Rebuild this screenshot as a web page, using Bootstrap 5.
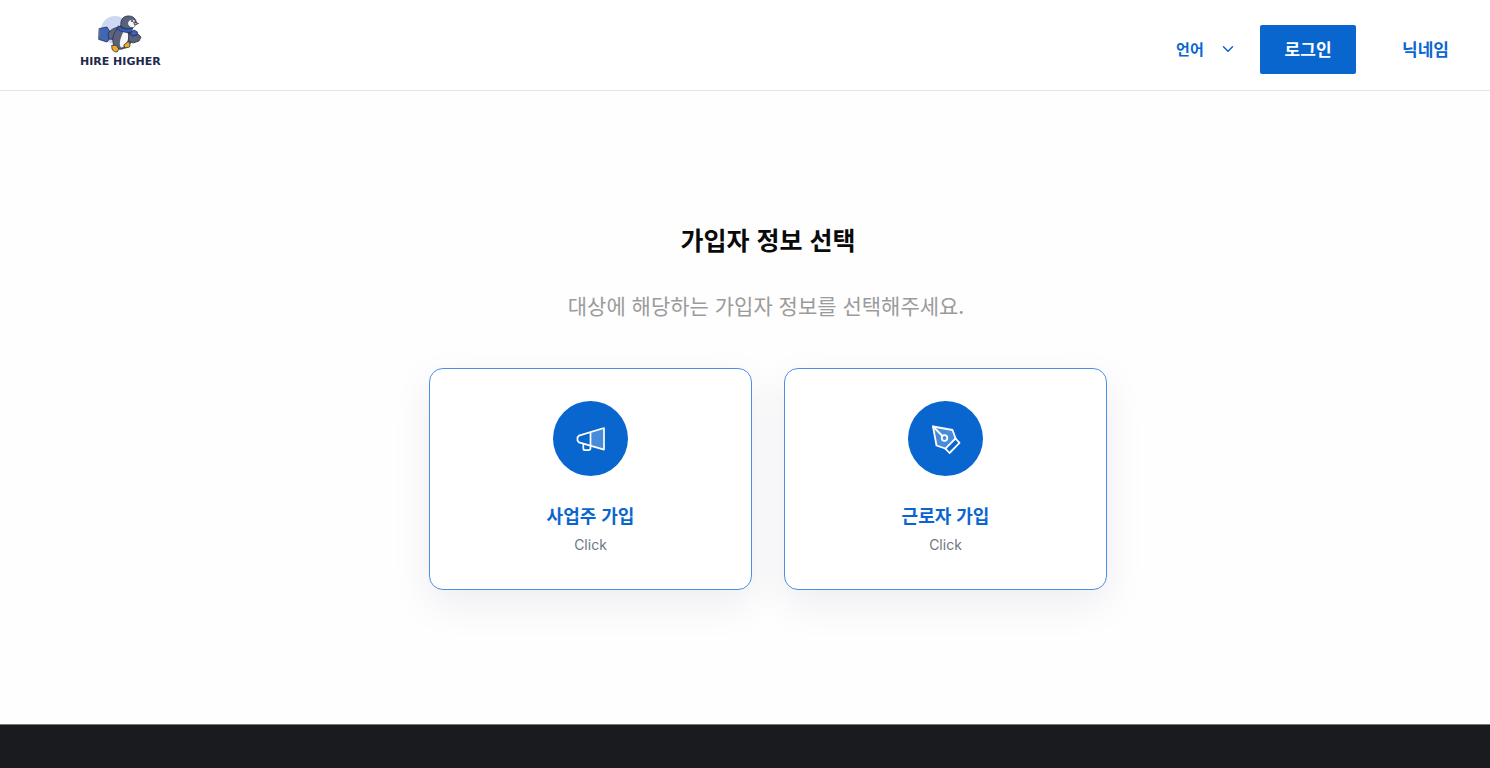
<!DOCTYPE html>
<html lang="ko">
<head>
<meta charset="utf-8">
<meta name="viewport" content="width=device-width, initial-scale=1">
<title>가입자 정보 선택 - Hire Higher</title>
<link href="https://cdn.jsdelivr.net/npm/bootstrap@5.3.0/dist/css/bootstrap.min.css" rel="stylesheet">
<style>
  :root { --brand: #0a66cf; }
  body { font-family: "Noto Sans CJK KR", "Noto Sans", sans-serif; color: #0a0a0a; background: #fefefe; }
  .site-header { min-height: 91px; border-bottom: 1px solid #e6e6e6; padding: 0 41px 8px 80px; background: #fff; }
  .brand-name { font: 700 11px/12px "DejaVu Sans", sans-serif; color: #20294f; }
  .site-logo svg { width: 50px; height: 42px; }
  .header-tools { padding-top: 16px; }
  .lang-select {
    width: 84px; padding: 0 26px 0 0; border: 0; color: var(--brand);
    font-size: 15px; font-weight: 700; line-height: 24px; background-color: transparent;
    background-image: url("data:image/svg+xml,%3Csvg xmlns='http://www.w3.org/2000/svg' viewBox='0 0 12 12'%3E%3Cpath d='M1.5 3.8 6 8.3l4.5-4.5' fill='none' stroke='%230a66cf' stroke-width='1.5' stroke-linecap='round' stroke-linejoin='round'/%3E%3C/svg%3E");
    background-size: 12px 12px; background-position: right 26px center;
  }
  .btn-login { width: 96px; height: 49px; border-radius: 2px; background: var(--brand); color: #fff; font-size: 17px; font-weight: 700; }
  .btn-login:hover { background: #0856b0; color: #fff; }
  .nickname { color: var(--brand); font-size: 17px; font-weight: 700; margin-left: 46px; }
  .signup { padding: 126px 0 134px 46px; }
  .signup-title { font-size: 25px; line-height: 44px; font-weight: 700; }
  .signup-lead { font-size: 21px; line-height: 32px; color: #9b9b9b; margin: 28px 4px 47px 0; }
  .choices { max-width: 678px; gap: 32px; }
  .choice {
    flex: 1 1 0; padding: 32px 16px; background: #fff;
    border: 1px solid #4a90e4; border-radius: 14px;
    box-shadow: 0 14px 42px rgba(8, 15, 82, .07);
  }
  .choice-icon { width: 75px; height: 75px; background: var(--brand); margin-bottom: 25px; }
  .choice-icon svg { width: 30px; height: 30px; }
  .choice-title { font-size: 18px; line-height: 28px; font-weight: 700; color: var(--brand); }
  .choice-hint { font: 400 14px/24px Inter, sans-serif; color: #6f7683; margin-top: 4px; }
  .site-footer { min-height: 44px; background: #1a1b1f; border-top: 1px solid #77787b; }
</style>
</head>
<body class="d-flex flex-column min-vh-100">

<header class="site-header d-flex align-items-center justify-content-between">
  <a href="#" class="site-logo d-flex flex-column align-items-center text-decoration-none">
    <svg viewBox="0 0 50 42" aria-hidden="true">
      <circle cx="20" cy="16" r="14" fill="#cfd8f2"/>
      <g stroke="#252c49" stroke-width=".8" stroke-linejoin="round" stroke-linecap="round">
        <path d="M4.500 14.500 12 13l2.500 4 .5 7-3 4-8-2.500z" fill="#3f67b5"/>
        <path d="M25 13c-6 .5-10 3-12 7l1 5 4 .5 6-4z" fill="#5a6483"/>
        <path d="M25 12c-5 4-8 10-7 16 .6 5 4 8 9 7 6-1.500 11-7 10.500-13L34 13z" fill="#59617d"/>
        <path d="M29 16c4 2 5 5 4 9-1 5-4 8-7 8.500-2-3-1-7 0-10z" fill="#f6f6f8" stroke="none"/>
        <path d="M34 18c1 3 3 4 5 3l4-1 3 3-2 4-6 2-4-2z" fill="#59617d"/>
        <path d="M35 19l4-3 3.500 2-.5 3-4 1z" fill="#3563bd"/>
        <path d="M26 12c-1-6 2-10 7-10 5-.5 8 3 8.500 7L39 13c-4 3-9 3-13-1z" fill="#59617d"/>
        <path d="M33 9c1-3 4-4 6.500-2.500l1.500 4-2 2.500c-3 1-6-1-6-4z" fill="#f6f6f8" stroke="none"/>
        <path d="M39 8l4.500 1.500L40 11z" fill="#e7b55b"/>
        <path d="M23.500 12c4 3 9 4 14 2l-1 4c-5 1-10 0-14-3z" fill="#2f61c4"/>
        <path d="M17 31.500l4-.5 3 4-2 3c-4 0-6-3-5-6.500z" fill="#efab20"/>
        <path d="M29 31l4-3.500c2 1 2.500 3 1.500 5.500l-4 1z" fill="#efab20"/>
      </g>
      <circle cx="37" cy="7" r=".9" fill="#20243a"/>
    </svg>
    <span class="brand-name">HIRE HIGHER</span>
  </a>

  <nav class="header-tools d-flex align-items-center" aria-label="사용자 메뉴">
    <select class="form-select lang-select" aria-label="언어">
      <option>언어</option>
    </select>
    <button type="button" class="btn btn-login border-0 p-0">로그인</button>
    <a href="#" class="nickname text-decoration-none">닉네임</a>
  </nav>
</header>

<main class="signup flex-grow-1 text-center">
  <h1 class="signup-title mb-0">가입자 정보 선택</h1>
  <p class="signup-lead">대상에 해당하는 가입자 정보를 선택해주세요.</p>

  <div class="choices d-flex mx-auto">
    <a href="#" class="choice d-flex flex-column align-items-center text-decoration-none">
      <span class="choice-icon rounded-circle d-flex align-items-center justify-content-center">
        <svg viewBox="0 0 30 30" fill="none" stroke="#fff" stroke-width="1.700" stroke-linejoin="round" stroke-linecap="round" aria-hidden="true">
          <path d="M14.500 8.200 28 4v21.600l-13.500-4.800z" fill="#fff" fill-opacity=".25" stroke="none"/>
          <path d="M3 11.600 28 4v21.600L3 18.400l-1.500-2v-3z"/>
          <path d="M14.500 8.600v15.400c0 1.400-.8 2.200-2 2.200H9.300c-1.200 0-2-.8-2-2v-4"/>
        </svg>
      </span>
      <span class="choice-title">사업주 가입</span>
      <span class="choice-hint">Click</span>
    </a>
    <a href="#" class="choice d-flex flex-column align-items-center text-decoration-none">
      <span class="choice-icon rounded-circle d-flex align-items-center justify-content-center">
        <svg viewBox="0 0 30 30" fill="none" stroke="#fff" stroke-width="1.800" stroke-linejoin="round" stroke-linecap="round" aria-hidden="true">
          <path d="M2 2.500 21.500 6 25 15.500 15.500 25 5.500 21.500z" fill="#fff" fill-opacity=".25"/>
          <path d="M2 2.500 11.500 12"/>
          <circle cx="13.500" cy="14" r="2.800"/>
          <path d="M24.500 14.500 28.500 18.800 18.500 29 14.400 24.600z" fill="#0a66cf"/>
        </svg>
      </span>
      <span class="choice-title">근로자 가입</span>
      <span class="choice-hint">Click</span>
    </a>
  </div>
</main>

<footer class="site-footer"></footer>

<script src="https://cdn.jsdelivr.net/npm/bootstrap@5.3.0/dist/js/bootstrap.bundle.min.js"></script>
</body>
</html>
